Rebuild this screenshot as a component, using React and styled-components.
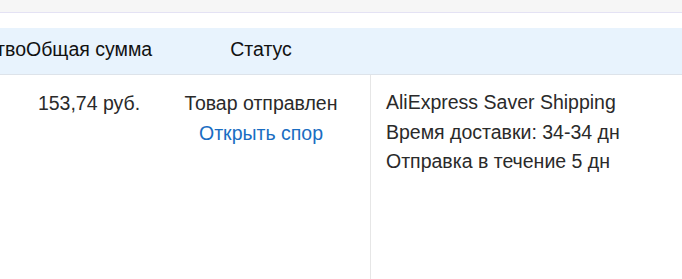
import React from "react";
import styled, { createGlobalStyle } from "styled-components";

const GlobalStyle = createGlobalStyle`
  html, body {
    margin: 0;
    padding: 0;
    background: #ffffff;
    font-family: "Liberation Sans", Arial, sans-serif;
    color: #333;
  }
`;

const order = {
  total: "153,74 руб.",
  status: "Товар отправлен",
  shipping: [
    "AliExpress Saver Shipping",
    "Время доставки: 34-34 дн",
    "Отправка в течение 5 дн",
  ],
};

const App = () => {
  return (
    <>
      <GlobalStyle />
      <Page>
        <TopBar />
        <Spacer />
        <HeaderRow>
          <HeadCell align="right">тво</HeadCell>
          <HeadCell>Общая сумма</HeadCell>
          <HeadCell>Статус</HeadCell>
          <HeadCell />
        </HeaderRow>
        <BodyRow>
          <Cell />
          <Cell>{order.total}</Cell>
          <Cell>
            <div>{order.status}</div>
            <Link href="#">Открыть спор</Link>
          </Cell>
          <ShippingCell>
            {order.shipping.map((line) => (
              <div key={line}>{line}</div>
            ))}
          </ShippingCell>
        </BodyRow>
      </Page>
    </>
  );
};

export default App;

const Page = styled.div`
  width: 682px;
  height: 279px;
  overflow: hidden;
  display: flex;
  flex-direction: column;
`;

const TopBar = styled.div`
  height: 12px;
  background: #f6f6f6;
  border-bottom: 1px solid #e4e2f4;
`;

const Spacer = styled.div`
  height: 15px;
`;

const columns = "26px 126px 218px 1fr";

const HeaderRow = styled.div`
  display: grid;
  grid-template-columns: ${columns};
  height: 47px;
  background: #e8f3fd;
  border-bottom: 1px solid #dde3ea;
  align-items: center;
  box-sizing: border-box;
  padding-bottom: 4px;
`;

const HeadCell = styled.div`
  font-size: 19.5px;
  color: #111;
  white-space: nowrap;
  text-align: ${(p) => p.align || "center"};
  direction: ${(p) => (p.align === "right" ? "rtl" : "ltr")};
  overflow: visible;
`;

const BodyRow = styled.div`
  flex: 1;
  display: grid;
  grid-template-columns: ${columns};
`;

const Cell = styled.div`
  padding-top: 13px;
  font-size: 19.5px;
  line-height: 30px;
  color: #2a2a2a;
  text-align: center;
  white-space: nowrap;
  display: flex;
  flex-direction: column;
  align-items: center;
`;

const Link = styled.a`
  color: #1a6dc2;
  text-decoration: none;
`;

const ShippingCell = styled.div`
  border-left: 1px solid #e6e6e6;
  padding: 13px 0 0 15px;
  font-size: 19.5px;
  line-height: 29.6px;
  color: #2a2a2a;
  white-space: nowrap;
`;
